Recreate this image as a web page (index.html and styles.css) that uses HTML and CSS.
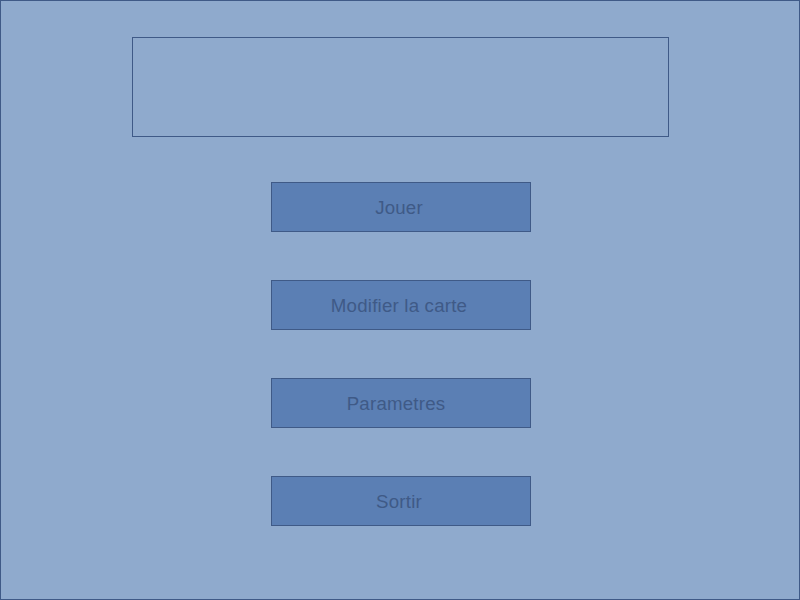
FILE: index.html
```html
<!DOCTYPE html>
<html>
<head>
<meta charset="utf-8">
<link rel="stylesheet" href="styles.css">
</head>
<body>
<div class="screen">
  <div class="title-box"></div>
  <div class="menu">
    <div class="btn">Jouer</div>
    <div class="btn">Modifier la carte</div>
    <div class="btn btn-wide">Parametres</div>
    <div class="btn">Sortir</div>
  </div>
</div>
</body>
</html>
```
FILE: styles.css
```css
html, body {
  margin: 0;
  padding: 0;
}
.screen {
  box-sizing: border-box;
  width: 800px;
  height: 600px;
  border: 1px solid #3f5a87;
  background: #8faacd;
  padding: 36px 0 0 131px;
  display: flex;
  flex-direction: column;
  align-items: flex-start;
}
.title-box {
  box-sizing: border-box;
  width: 537px;
  height: 100px;
  border: 1px solid #3f5a87;
}
.menu {
  margin: 45px 0 0 139px;
  display: flex;
  flex-direction: column;
  gap: 48px;
}
.btn {
  box-sizing: border-box;
  width: 260px;
  height: 50px;
  border: 1px solid #3f5a87;
  background: #5b7fb4;
  color: #3f5a87;
  font-family: "Liberation Sans", Arial, sans-serif;
  font-size: 18.7px;
  letter-spacing: 0.2px;
  display: flex;
  align-items: center;
  justify-content: center;
  padding: 1px 4px 0 0;
}
.btn-wide {
  padding-right: 10px;
}
```
